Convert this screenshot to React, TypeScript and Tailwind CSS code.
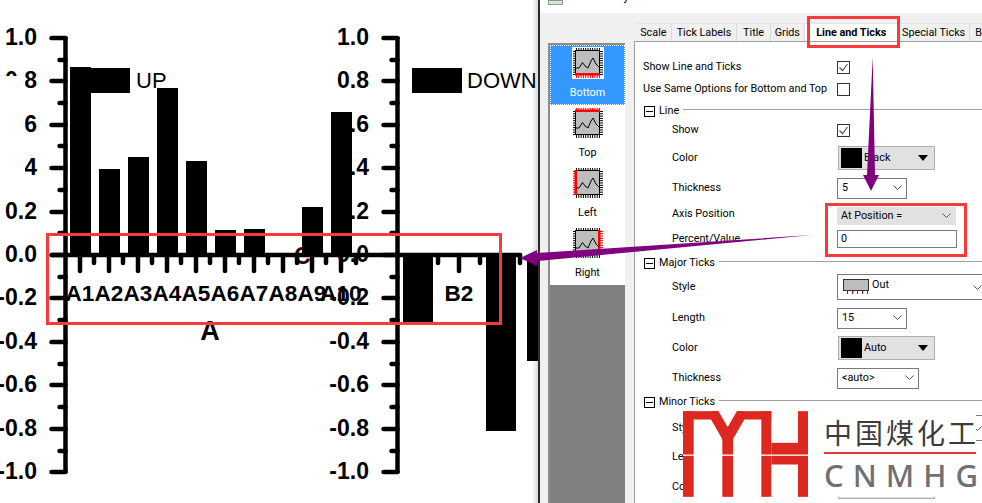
const yTicks = [
  { y: 38, label: '1.0' },
  { y: 81, label: '0.8' },
  { y: 125, label: '0.6' },
  { y: 168, label: '0.4' },
  { y: 212, label: '0.2' },
  { y: 255, label: '0.0' },
  { y: 298, label: '-0.2' },
  { y: 342, label: '-0.4' },
  { y: 385, label: '-0.6' },
  { y: 429, label: '-0.8' },
  { y: 472, label: '-1.0' },
];
const minorY = [60, 103, 146, 190, 233, 277, 320, 364, 407, 451];

const upBars = [
  { x: 70, top: 67, label: 'A1' },
  { x: 99, top: 169, label: 'A2' },
  { x: 128, top: 157, label: 'A3' },
  { x: 157, top: 88, label: 'A4' },
  { x: 186, top: 161, label: 'A5' },
  { x: 215, top: 230, label: 'A6' },
  { x: 244, top: 229, label: 'A7' },
  { x: 273, top: 255, label: 'A8' },
  { x: 302, top: 207, label: 'A9' },
  { x: 331, top: 112, label: 'A10' },
];
const downBars = [
  { x: 403, width: 30, bottom: 322 },
  { x: 486, width: 30, bottom: 431 },
  { x: 527, width: 11, bottom: 361 },
];
const xMinor = [94, 123, 152, 181, 210, 239, 268, 297, 326, 356, 438, 480, 520];

function Axis({ x }: { x: number }) {
  return (
    <g stroke="black" strokeWidth="4.5" strokeLinecap="round">
      <line x1={x} y1="37" x2={x} y2="473" strokeLinecap="butt" />
      {yTicks.map((t) => (
        <line key={t.y} x1={x - 14} y1={t.y} x2={x} y2={t.y} />
      ))}
      {minorY.map((y) => (
        <line key={y} x1={x - 6} y1={y} x2={x} y2={y} />
      ))}
    </g>
  );
}

function Chart() {
  return (
    <svg width="538" height="503" className="block font-['Liberation_Sans',sans-serif]">
      {yTicks.map((t) => (
        <g key={t.y} fontWeight="700" fontSize="23" textAnchor="end">
          <text x="37" y={t.y + 7}>{t.label}</text>
          <text x="369" y={t.y + 7}>{t.label}</text>
        </g>
      ))}
      <rect x="0" y="76" width="25" height="104" fill="white" />
      <text x="294" y="264" fontWeight="700" fontSize="23" fill="#3a0000">C</text>
      <Axis x={65.5} />
      <Axis x={397.5} />
      <g stroke="black" strokeWidth="4.5" strokeLinecap="round">
        <line x1="52" y1="255" x2="520" y2="255" />
        {upBars.map((b) => (
          <line key={b.label} x1={b.x + 10} y1="255" x2={b.x + 10} y2="271" />
        ))}
        <line x1="459" y1="255" x2="459" y2="271" />
        {xMinor.map((x) => (
          <line key={x} x1={x} y1="255" x2={x} y2="263" />
        ))}
      </g>
      {upBars.map((b) => (
        <rect key={b.label} x={b.x} y={b.top} width="21" height={255 - b.top} fill="black" />
      ))}
      {downBars.map((b) => (
        <rect key={b.x} x={b.x} y="255" width={b.width} height={b.bottom - 255} fill="black" />
      ))}
      <rect x="91" y="68" width="39" height="25" fill="black" />
      <rect x="412" y="68" width="50" height="25" fill="black" />
      <text x="136" y="88" fontSize="22">UP</text>
      <text x="467" y="88" fontSize="22">DOWN</text>
      <g fontWeight="700" fontSize="22.5" textAnchor="middle">
        {upBars.map((b) => (
          <text key={b.label} x={b.x + 10} y="301">{b.label}</text>
        ))}
        <text x="459" y="301">B2</text>
      </g>
      <text x="210" y="340" fontWeight="700" fontSize="27" textAnchor="middle">A</text>
    </svg>
  );
}

function ChipIcon({ side }: { side: 'bottom' | 'top' | 'left' | 'right' }) {
  const steps = [0, 1, 2, 3, 4, 5, 6, 7, 8, 9, 10];
  const edge = (s: string) => (s === side ? '#ff0000' : '#000000');
  return (
    <svg width="32" height="32" viewBox="0 0 32 32" className="block">
      {steps.map((i) => (
        <g key={i} strokeWidth="1">
          <line x1={4.5 + i * 2.3} y1="1" x2={4.5 + i * 2.3} y2="4" stroke={edge('top')} />
          <line x1={4.5 + i * 2.3} y1="27" x2={4.5 + i * 2.3} y2="31" stroke={edge('bottom')} />
          <line x1="1" y1={4.5 + i * 2.3} x2="4" y2={4.5 + i * 2.3} stroke={edge('left')} />
          <line x1="27" y1={4.5 + i * 2.3} x2="31" y2={4.5 + i * 2.3} stroke={edge('right')} />
        </g>
      ))}
      <rect x="3.5" y="3.5" width="24" height="24" fill="#bdbdbd" stroke="#000000" />
      {side === 'bottom' && <rect x="3" y="26" width="25" height="2.5" fill="#ff0000" />}
      {side === 'top' && <rect x="3" y="2.5" width="25" height="2.5" fill="#ff0000" />}
      {side === 'left' && <rect x="2.5" y="3" width="2.5" height="25" fill="#ff0000" />}
      {side === 'right' && <rect x="26" y="3" width="2.5" height="25" fill="#ff0000" />}
      <path d="M4 21 L7 21 L10.5 15.5 L13 19 L16 21 L19 14 L21 11 L24 17 L27 20" fill="none" stroke="#000000" strokeWidth="1" />
    </svg>
  );
}

function Checkbox({ checked }: { checked?: boolean }) {
  return (
    <div className="w-[13px] h-[13px] border border-[#333333] bg-white flex items-center justify-center">
      {checked && (
        <svg width="11" height="11" viewBox="0 0 11 11">
          <path d="M1.5 5.5 L4.5 8.5 L9.5 2" fill="none" stroke="#555555" strokeWidth="1.2" />
        </svg>
      )}
    </div>
  );
}

function Chevron() {
  return (
    <svg width="9" height="6" viewBox="0 0 9 6" className="shrink-0">
      <path d="M0.5 0.5 L4.5 4.5 L8.5 0.5" fill="none" stroke="#555555" strokeWidth="1" />
    </svg>
  );
}

function Select({ text, className }: { text: string; className: string }) {
  return (
    <div className={`border border-[#7a7a7a] bg-white flex items-center justify-between pl-[4px] pr-[4px] ${className}`}>
      <span>{text}</span>
      <Chevron />
    </div>
  );
}

function ColorButton({ text }: { text: string }) {
  return (
    <div className="w-[97px] h-[24px] ml-[1px] bg-[#e1e1e1] border border-[#adadad] flex items-center pl-[2px] pr-[6px]">
      <div className="w-[21px] h-[20px] bg-black" />
      <span className="ml-[2px] flex-1">{text}</span>
      <svg width="10" height="6" viewBox="0 0 10 6">
        <path d="M0 0 H10 L5 6 Z" fill="black" />
      </svg>
    </div>
  );
}

function StyleSelect() {
  return (
    <div className="w-[160px] h-[26px] border border-[#7a7a7a] bg-white flex items-center pl-[5px] relative shrink-0">
      <svg width="28" height="16" viewBox="0 0 28 16" className="shrink-0">
        <rect x="0.5" y="0.5" width="25" height="11" fill="#bdbdbd" stroke="#333333" />
        <path d="M4.5 12 V15 M9.5 12 V15 M14.5 12 V15 M19.5 12 V15 M24.5 12 V15" stroke="#cc0000" />
      </svg>
      <span className="ml-[1px] -mt-[4px]">Out</span>
      <div className="absolute left-[135px] top-[10px]">
        <Chevron />
      </div>
    </div>
  );
}

function Row({ label, className, children }: { label: string; className: string; children?: React.ReactNode }) {
  return (
    <div className={`flex items-center shrink-0 pl-[37px] ${className}`}>
      <span className="w-[165px] shrink-0 whitespace-nowrap">{label}</span>
      {children}
    </div>
  );
}

function Section({ label, className, lineClass }: { label: string; className: string; lineClass: string }) {
  return (
    <div className={`flex items-center pl-[9px] shrink-0 ${className}`}>
      <div className="w-[11px] h-[11px] border border-black relative flex items-center justify-center">
        <div className="w-[7px] h-px bg-black" />
      </div>
      <span className="ml-[4px] whitespace-nowrap">{label}</span>
      <div className={`flex-1 h-px bg-[#a0a0a0] ml-[4px] ${lineClass}`} />
    </div>
  );
}

function SideList() {
  const items = [
    { side: 'bottom', name: 'Bottom' },
    { side: 'top', name: 'Top' },
    { side: 'left', name: 'Left' },
    { side: 'right', name: 'Right' },
  ] as const;
  return (
    <div className="w-[77px] h-[460px] border-l-2 border-t-2 border-[#8c8c8c] bg-[#808080] shrink-0">
      {items.map((it) => (
        <div
          key={it.side}
          className={
            it.side === 'bottom'
              ? 'h-[60px] bg-[#3399ff] text-white border border-dotted border-white flex flex-col items-center pt-[1px]'
              : 'h-[60px] bg-white flex flex-col items-center pt-[2px]'
          }
        >
          <div className="bg-white">
            <ChipIcon side={it.side} />
          </div>
          <span className="mt-[7px] leading-[14px]">{it.name}</span>
        </div>
      ))}
    </div>
  );
}

const tabs = [
  { name: 'Scale', width: 'w-[36px]' },
  { name: 'Tick Labels', width: 'w-[66px]' },
  { name: 'Title', width: 'w-[34px]' },
  { name: 'Grids', width: 'w-[34px]' },
];

function Dialog() {
  return (
    <div className="w-[444px] h-[503px] border-l-2 border-[#2b2b2b] bg-[#f0f0f0] flex flex-col overflow-hidden text-[10.8px] text-black font-['Roboto',sans-serif]">
      <div className="h-[13px] bg-white flex items-start pl-[8px] overflow-hidden shrink-0">
        <div className="w-[15px] h-[5px] bg-[#d8e4d8] border border-[#8a9a8a]" />
        <span className="ml-[5px] -mt-[13px] text-[12px]">X Axis - Layer 1</span>
      </div>
      <div className="flex flex-1 pl-[8px] min-h-0">
        <div className="pt-[30px] shrink-0">
          <SideList />
        </div>
        <div className="ml-[9px] pt-[10px] flex-1 flex flex-col min-w-0">
          <div className="flex h-[18px] ml-[2px] shrink-0 border-t border-[#e4e4e4] leading-[18px]">
            {tabs.map((t) => (
              <div key={t.name} className={`${t.width} border-r border-[#d9d9d9] text-center whitespace-nowrap`}>{t.name}</div>
            ))}
            <div className="w-[94px] bg-white text-center font-bold whitespace-nowrap">Line and Ticks</div>
            <div className="w-[73px] border-r border-[#d9d9d9] text-center whitespace-nowrap">Special Ticks</div>
            <div className="pl-[5px]">B</div>
          </div>
          <div className="flex-1 bg-white border-l border-t border-[#a0a0a0] pt-[14px] flex flex-col min-h-0">
            <div className="flex items-center h-[22px] pl-[8px] shrink-0">
              <span className="w-[194px] whitespace-nowrap">Show Line and Ticks</span>
              <Checkbox checked />
            </div>
            <div className="flex items-center h-[22px] pl-[8px] shrink-0">
              <span className="w-[194px] whitespace-nowrap">Use Same Options for Bottom and Top</span>
              <Checkbox />
            </div>
            <Section label="Line" className="h-[21px] pt-[1px]" lineClass="-mt-[4px]" />
            <Row label="Show" className="h-[18px]">
              <Checkbox checked />
            </Row>
            <Row label="Color" className="h-[38px]">
              <ColorButton text="Black" />
            </Row>
            <Row label="Thickness" className="h-[22px]">
              <Select text="5" className="w-[70px] h-[21px]" />
            </Row>
            <Row label="Axis Position" className="h-[31px]">
              <div className="w-[119px] h-[18px] mt-[3px] bg-[#e1e1e1] flex items-center justify-between pl-[4px] pr-[5px]">
                <span>At Position =</span>
                <Chevron />
              </div>
            </Row>
            <Row label="Percent/Value" className="h-[18px]">
              <div className="w-[120px] h-[18px] border border-[#7a7a7a] bg-white pl-[3px] leading-[16px]">0</div>
            </Row>
            <Section label="Major Ticks" className="h-[26px] pt-[4px]" lineClass="-mt-[4px]" />
            <Row label="Style" className="h-[26px]">
              <StyleSelect />
            </Row>
            <Row label="Length" className="h-[36px]">
              <Select text="15" className="w-[70px] h-[21px]" />
            </Row>
            <Row label="Color" className="h-[24px]">
              <ColorButton text="Auto" />
            </Row>
            <Row label="Thickness" className="h-[36px]">
              <Select text="<auto>" className="w-[82px] h-[21px]" />
            </Row>
            <Section label="Minor Ticks" className="h-[12px]" lineClass="-mt-[4px]" />
            <Row label="Style" className="h-[40px]">
              <StyleSelect />
            </Row>
            <Row label="Length" className="h-[18px]" />
            <Row label="Color" className="h-[42px]">
              <ColorButton text="Auto" />
            </Row>
          </div>
        </div>
      </div>
    </div>
  );
}

function Logo() {
  return (
    <div className="absolute left-[683px] top-[411px] w-[293px] h-[86px] bg-white flex">
      <svg width="125" height="86" viewBox="0 0 375 257" className="shrink-0" fill="#dc281e">
        <rect x="0" y="0" width="32" height="130" />
        <rect x="0" y="0" width="95" height="25" />
        <polyline points="88,0 134,80 180,0" fill="none" stroke="#dc281e" strokeWidth="32" />
        <rect x="118" y="70" width="32" height="60" />
        <rect x="175" y="0" width="90" height="25" />
        <rect x="235" y="0" width="30" height="130" />
        <rect x="345" y="0" width="30" height="130" />
        <rect x="265" y="95" width="80" height="35" />
        <rect x="0" y="134" width="32" height="123" />
        <rect x="118" y="134" width="32" height="123" />
        <rect x="235" y="134" width="30" height="123" />
        <rect x="265" y="134" width="80" height="26" />
        <rect x="345" y="134" width="30" height="123" />
      </svg>
      <div className="ml-[16px] w-[152px] flex flex-col">
        <div className="mt-[4px] h-[34px] leading-[34px] text-[28px] tracking-[3px] whitespace-nowrap text-[#3c3c3c] font-['Noto_Sans_CJK_SC',sans-serif]">
          中国煤化工
        </div>
        <div className="mt-[3px] h-[2px] bg-[#e23a3a]" />
        <div className="mt-[6px] h-[30px] leading-[30px] text-[31px] font-medium tracking-[9px] whitespace-nowrap text-[#707070] font-['Noto_Sans',sans-serif]">
          CNMHG
        </div>
      </div>
    </div>
  );
}

export default function App() {
  return (
    <div className="relative w-[982px] h-[503px] bg-white overflow-hidden flex">
      <div className="w-[538px] h-[503px] shrink-0 overflow-hidden">
        <Chart />
      </div>
      <Dialog />
      <div className="absolute left-[532px] top-0 w-[6px] h-[503px] bg-gradient-to-r from-transparent to-black/15" />
      <div className="absolute left-[46px] top-[233px] w-[456px] h-[92px] border-[3px] border-[#f93a3a]" />
      <div className="absolute left-[807px] top-[16px] w-[93px] h-[32px] border-[3px] border-[#f93a3a]" />
      <div className="absolute left-[825px] top-[203px] w-[142px] h-[54px] border-[3px] border-[#f93a3a]" />
      <Logo />
      <svg width="982" height="503" className="absolute left-0 top-0 pointer-events-none">
        <polygon points="872.7,57 875,175 879,175 871,191 863,175 867,175" fill="#800080" />
        <polygon points="812,235 538,261 537,266 520,258 537,250 537,253" fill="#800080" />
      </svg>
    </div>
  );
}
